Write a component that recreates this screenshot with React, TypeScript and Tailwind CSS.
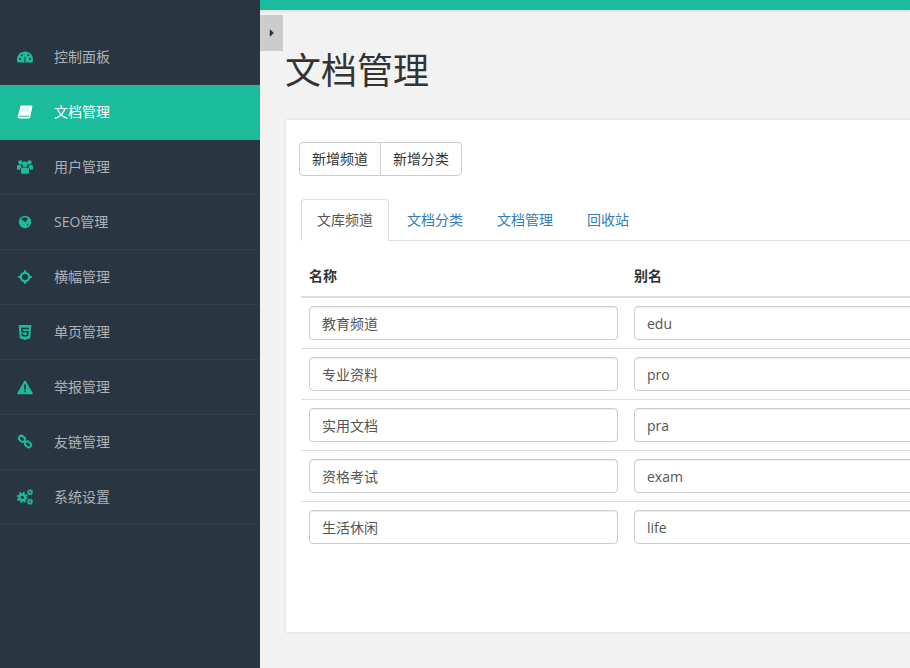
import type { ReactNode } from "react"
import { FaCaretRight, FaHtml5 } from "react-icons/fa"

const TEAL = "#1abc9c"
const DARK = "#2a3542"

function Icon({ children }: { children: ReactNode }) {
  return (
    <svg viewBox="0 0 16 16" width="16" height="16" fill="currentColor">
      {children}
    </svg>
  )
}

const Tachometer = () => (
  <Icon>
    <path d="M.5 13.500C.1 12.400 0 11.500 0 10.400 0 6 3.400 2.400 8 2.400s8 3.600 8 8c0 1.100-.1 2-.5 3.100z" />
    <path d="M7.400 12.900l.2-5.200h.8l.2 5.200z" fill={DARK} />
    <circle cx="3" cy="10" r="1" fill={DARK} />
    <circle cx="13" cy="10" r="1" fill={DARK} />
    <circle cx="4.700" cy="6.300" r="1" fill={DARK} />
    <circle cx="11.300" cy="6.300" r="1" fill={DARK} />
  </Icon>
)

const Book = () => (
  <Icon>
    <path d="M3.800 1.500H14.500c.7 0 1 .5.9 1.100L13.100 13.500c-.2.700-.6 1-1.300 1H2.300C1 14.500.3 13.500.7 12.200z" />
    <path d="M2.300 11.800h9.900l-.2 1H2.200c-.4 0-.4-1 .1-1z" fill={TEAL} />
    <path d="M5.400 4h6.500l-.1.800H5.300zM5 6h6.500l-.1.800H4.900z" fill={TEAL} opacity="0.35" />
  </Icon>
)

const Users = () => (
  <Icon>
    <circle cx="3.500" cy="3.400" r="2.200" />
    <circle cx="12.500" cy="3.400" r="2.200" />
    <circle cx="8" cy="5.300" r="2.700" />
    <path d="M0 7.500c0-1 .6-1.600 1.500-1.600h2.100c.1.900.6 1.700 1.300 2.200-1.200.4-1.900 1.400-2 2.700H1c-.7 0-1-.4-1-1zM16 7.500c0-1-.6-1.600-1.500-1.600h-2.100c-.1.900-.6 1.700-1.300 2.200 1.200.4 1.900 1.400 2 2.700H15c.7 0 1-.4 1-1z" />
    <path d="M4 10.300C4 9.100 4.700 8.400 5.800 8.400h4.400c1.100 0 1.800.7 1.800 1.900v3.100c0 .9-.5 1.300-1.200 1.300H5.200c-.7 0-1.200-.4-1.200-1.300z" />
  </Icon>
)

const Globe = () => (
  <Icon>
    <circle cx="8" cy="8" r="6.200" />
    <path d="M4.200 5c.5-1.200 1.700-1.700 3-1.600 1 .1 1.800-.1 3 .4.700.5.400 1.500-.2 2.100-.6.800-1.200 1.300-1.800 2.600-.5-.1-.8-.6-1.200-1.300-.3-.8-1.200-.4-1.800-1z" fill={DARK} />
    <path d="M9.500 10.600l1.400-.7.500.9-1 1.100z" fill={DARK} />
  </Icon>
)

const Crosshairs = () => (
  <Icon>
    <circle cx="8" cy="8" r="4.200" fill="none" stroke="currentColor" strokeWidth="2.300" />
    <path d="M6.900 1.200h2.200v3.600H6.900zM6.900 11.200h2.200v3.600H6.900zM1.200 6.900h3.600v2.200H1.200zM11.200 6.900h3.600v2.200h-3.600z" />
  </Icon>
)

const Warning = () => (
  <Icon>
    <path d="M8 1.500c.3 0 .6.200.8.500l6.900 12c.3.600-.1 1.200-.8 1.200H1.100c-.7 0-1.100-.6-.8-1.200L7.200 2c.2-.3.500-.5.800-.5z" />
    <path d="M7 5.500h2l-.2 5H7.200zM7.100 11.400h1.800v1.800H7.100z" fill={DARK} />
  </Icon>
)

const Chain = () => (
  <Icon>
    <g fill="none" stroke="currentColor" strokeWidth="2">
      <rect x="-3.300" y="-2.500" width="6.600" height="5" rx="2.500" transform="translate(5 4.800) rotate(40)" />
      <rect x="-3.300" y="-2.500" width="6.600" height="5" rx="2.500" transform="translate(11 10.400) rotate(40)" />
    </g>
  </Icon>
)

function Gear({ cx, cy, r, width, tooth }: { cx: number; cy: number; r: number; width: number; tooth: number }) {
  const teethRadius = r + width / 2 + tooth / 2 - 0.1
  const step = (2 * Math.PI * teethRadius) / 16
  return (
    <g fill="none" stroke="currentColor">
      <circle cx={cx} cy={cy} r={r} strokeWidth={width} />
      <circle cx={cx} cy={cy} r={teethRadius} strokeWidth={tooth} strokeDasharray={`${step} ${step}`} />
    </g>
  )
}

const Cogs = () => (
  <Icon>
    <Gear cx={5.300} cy={8.400} r={3} width={2.600} tooth={1.400} />
    <Gear cx={13.100} cy={3.200} r={1.700} width={1.600} tooth={1} />
    <Gear cx={13.100} cy={12.800} r={1.700} width={1.600} tooth={1} />
  </Icon>
)

const Html5 = () => <FaHtml5 className="text-[17px]" />

const menu = [
  { name: "控制面板", icon: Tachometer },
  { name: "文档管理", icon: Book, active: true },
  { name: "用户管理", icon: Users },
  { name: "SEO管理", icon: Globe },
  { name: "横幅管理", icon: Crosshairs },
  { name: "单页管理", icon: Html5 },
  { name: "举报管理", icon: Warning },
  { name: "友链管理", icon: Chain },
  { name: "系统设置", icon: Cogs },
]

const channels = [
  { name: "教育频道", alias: "edu" },
  { name: "专业资料", alias: "pro" },
  { name: "实用文档", alias: "pra" },
  { name: "资格考试", alias: "exam" },
  { name: "生活休闲", alias: "life" },
]

const tabs = ["文档分类", "文档管理", "回收站"]

export default function App() {
  return (
    <div className="flex min-h-screen h-[668px] overflow-hidden bg-[#f2f2f2] text-sm text-[#333] font-['Open_Sans','Noto_Sans_CJK_SC',sans-serif]">
      {/* Sidebar */}
      <aside className="w-[260px] shrink-0 bg-[#2a3542] pt-[30px]">
        {menu.map((item) => (
          <a
            key={item.name}
            className={`flex h-[55px] items-center border-b pl-[17px] ${
              item.active ? "border-[#1abc9c] bg-[#1abc9c] text-white" : "border-[#323d4a] text-[#aeb2b7]"
            }`}
          >
            <span className={`flex w-[16px] justify-center ${item.active ? "text-white" : "text-[#1abc9c]"}`}>
              <item.icon />
            </span>
            <span className="ml-[21px]">{item.name}</span>
          </a>
        ))}
      </aside>

      {/* Main */}
      <main className="min-w-0 flex-1">
        <div className="h-[10px] bg-[#1abc9c] shadow-[0_1px_3px_rgba(0,0,0,0.12)]" />
        <button className="mt-[5px] flex h-[36px] w-[23px] items-center justify-center bg-[#ccc] text-[#2a3542]">
          <FaCaretRight className="text-[12px]" />
        </button>
        <h1 className="ml-[25px] text-4xl leading-[40px] text-[#333]">文档管理</h1>

        <section className="ml-[26px] mt-[29px] h-[512px] w-[800px] bg-white pl-[13px] pt-[22px] shadow-[0_0_3px_rgba(0,0,0,0.12)]">
          <div className="flex">
            <button className="h-[34px] rounded-l border border-[#ccc] px-3">新增频道</button>
            <button className="-ml-px h-[34px] rounded-r border border-[#ccc] px-3">新增分类</button>
          </div>

          <div className="ml-[2px] mt-[23px]">
            <div className="flex h-[42px] border-b border-[#ddd]">
              <span className="flex h-[42px] items-center rounded-t border border-[#ddd] border-b-white bg-white px-[15px] text-[#555]">
                文库频道
              </span>
              {tabs.map((tab) => (
                <a key={tab} className="ml-[2px] flex h-[41px] items-center border border-transparent px-[15px] text-[#337ab7]">
                  {tab}
                </a>
              ))}
            </div>

            <table className="w-full table-fixed border-collapse">
              <thead>
                <tr className="border-b-2 border-[#ddd]">
                  <th className="h-[56px] w-[325px] px-2 pt-[14px] text-left font-bold">名称</th>
                  <th className="h-[56px] px-2 pt-[14px] text-left font-bold">别名</th>
                </tr>
              </thead>
              <tbody>
                {channels.map((row) => (
                  <tr key={row.alias} className="border-b border-[#ddd] last:border-b-0">
                    <td className="h-[51px] p-2">
                      <div className="flex h-[34px] items-center rounded border border-[#ccc] px-3 pt-[2px] text-[#555] shadow-[inset_0_1px_1px_rgba(0,0,0,0.075)]">
                        {row.name}
                      </div>
                    </td>
                    <td className="h-[51px] p-2">
                      <div className="flex h-[34px] items-center rounded border border-[#ccc] px-3 pt-[2px] text-[#555] shadow-[inset_0_1px_1px_rgba(0,0,0,0.075)]">
                        {row.alias}
                      </div>
                    </td>
                  </tr>
                ))}
              </tbody>
            </table>
          </div>
        </section>
      </main>
    </div>
  )
}
